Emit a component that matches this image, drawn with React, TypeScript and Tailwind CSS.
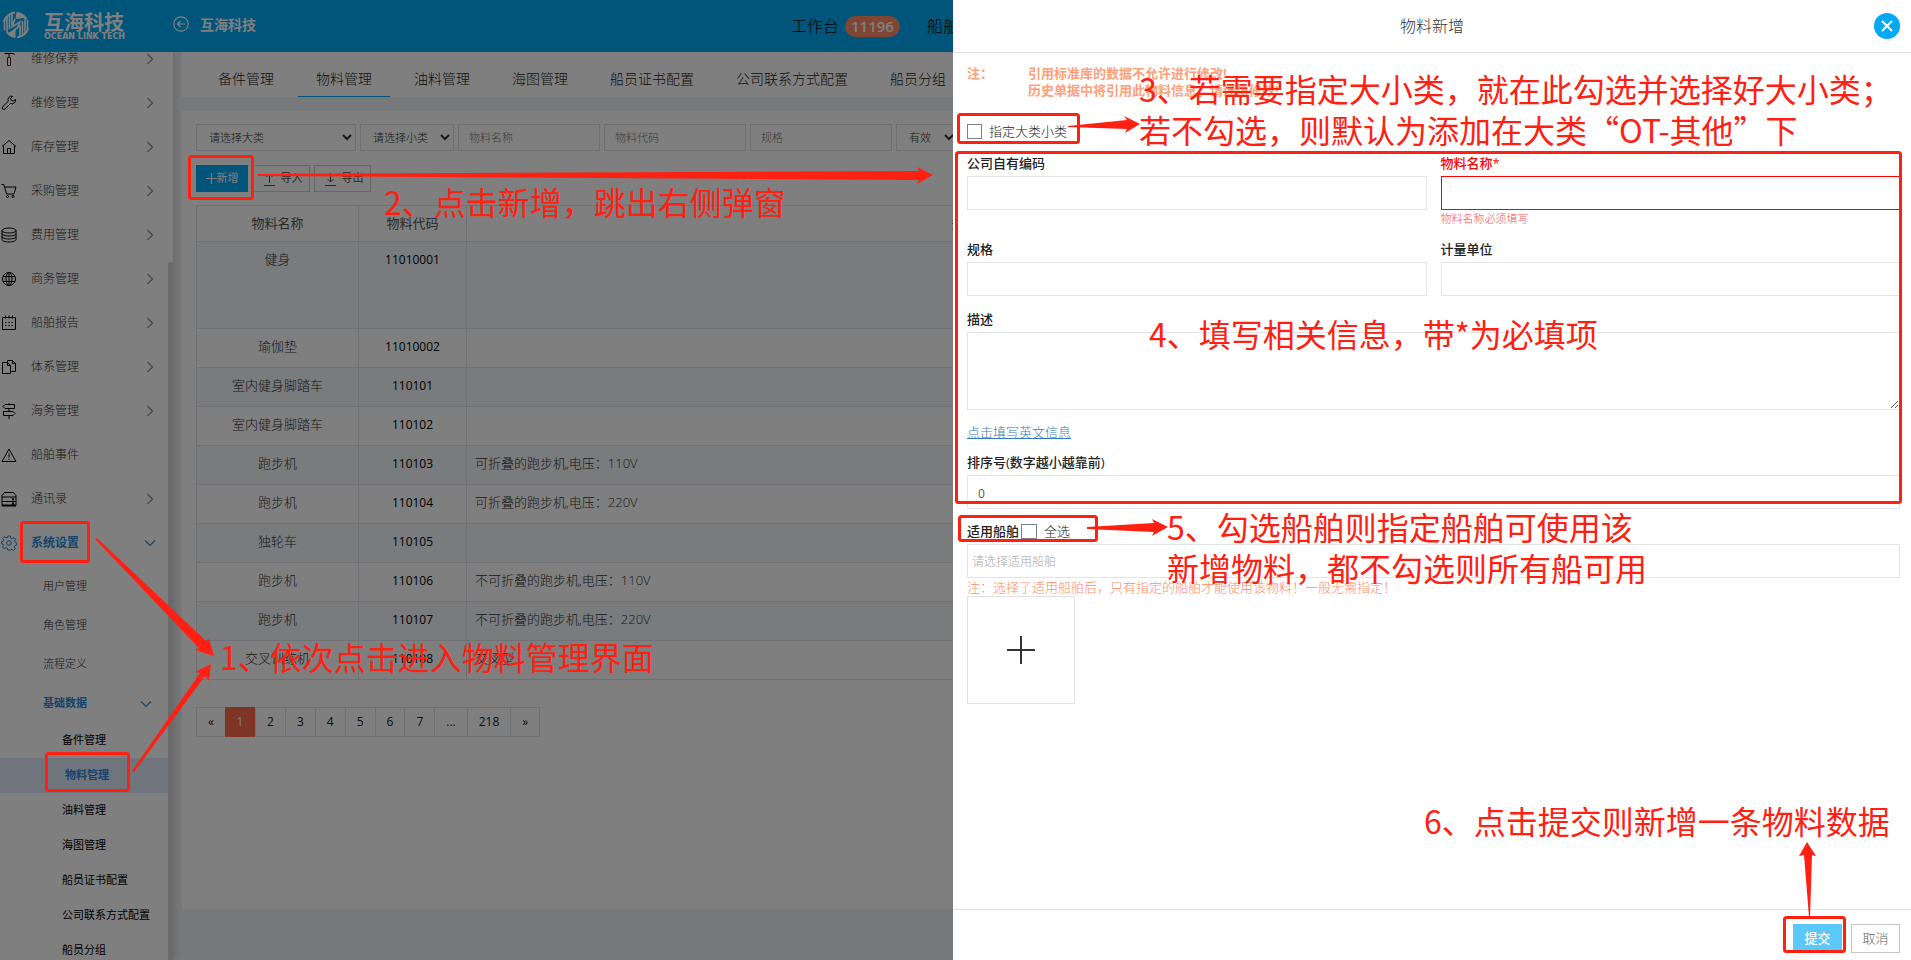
import type { ReactNode } from 'react';
import { X } from 'lucide-react';

interface MenuItem {
    name: string;
    icon: ReactNode;
    leaf?: boolean;
}

const menus: MenuItem[] = [
    { name: '维修保养', icon: <><path d="M3.5 2.500h9l1 1.500M8 2.500v4" /><path d="M6.500 6.500h3v8h-3z" stroke="#7a1010" /></> },
    { name: '维修管理', icon: <path d="M14.500 4.500a3.600 3.600 0 0 1-5 4L4 14a1.600 1.600 0 0 1-2.300-2.300L7.300 6.300a3.600 3.600 0 0 1 4.300-5L9.700 3.400l.6 2 2 .6z" /> },
    { name: '库存管理', icon: <><path d="M1 7.500 8 1.500l7 6" /><path d="M2.500 6.500v8h11v-8M6.500 14.500v-5h3v5" /></> },
    { name: '采购管理', icon: <><path d="M.5 1.500h2.300l2.700 9.500h7.500l2-7H4" /><circle cx="6.500" cy="13.500" r="1" /><circle cx="12" cy="13.500" r="1" /></> },
    { name: '费用管理', icon: <><ellipse cx="8" cy="3.500" rx="7" ry="2.500" /><path d="M1 3.500v9c0 1.400 3.100 2.500 7 2.500s7-1.100 7-2.500v-9M1 6.500C1 7.900 4.100 9 8 9s7-1.100 7-2.500M1 9.500C1 10.900 4.100 12 8 12s7-1.100 7-2.500" /></> },
    { name: '商务管理', icon: <><circle cx="8" cy="8" r="6.500" /><ellipse cx="8" cy="8" rx="3" ry="6.500" /><path d="M8 1.500v13M2 5.500h12M2 10.500h12" /></> },
    { name: '船舶报告', icon: <><path d="M1.500 2.500h13v12h-13zM4.500.5v3M8 .5v3M11.500.5v3" /><path d="M4 7.500h1.500M7.300 7.500h1.500M10.500 7.500H12M4 10.500h1.500M7.300 10.500h1.500M10.500 10.500H12" /></> },
    { name: '体系管理', icon: <><path d="M6.500 3.500V1.500h5l3 3v8h-5" /><path d="M11.500 1.500v3h3M1.500 3.500h5l3 3v8h-8zM6.500 3.500v3h3" /></> },
    { name: '海务管理', icon: <path d="M8 0v1.500M8 5.500v3M8 12.500V16M4 1.500h9.500v4H4L2 3.500zM12 8.500H2.500v4H12l2-2z" /> },
    { name: '船舶事件', icon: <><path d="M8 2 15 14.500H1z" /><path d="M8 6.500v4M8 11.800v1.200" /></>, leaf: true },
    { name: '通讯录', icon: <><path d="M3.500 1.500h9l2.500 3v10H1v-10zM1 6h14M1 10.500h14" /><path d="M11 8.300h2M11 12.500h2M1 14.500h14" strokeWidth="2" /></> },
];

const subMenus = ['用户管理', '角色管理', '流程定义'];
const dataMenus = ['备件管理', '物料管理', '油料管理', '海图管理', '船员证书配置', '公司联系方式配置', '船员分组'];
const tabs = ['备件管理', '物料管理', '油料管理', '海图管理', '船员证书配置', '公司联系方式配置', '船员分组'];
const pages = ['«', '1', '2', '3', '4', '5', '6', '7', '...', '218', '»'];

const materials = [
    { name: '健身', code: '11010001', spec: '', tall: true },
    { name: '瑜伽垫', code: '11010002', spec: '' },
    { name: '室内健身脚踏车', code: '110101', spec: '' },
    { name: '室内健身脚踏车', code: '110102', spec: '' },
    { name: '跑步机', code: '110103', spec: '可折叠的跑步机,电压：110V' },
    { name: '跑步机', code: '110104', spec: '可折叠的跑步机,电压：220V' },
    { name: '独轮车', code: '110105', spec: '' },
    { name: '跑步机', code: '110106', spec: '不可折叠的跑步机,电压：110V' },
    { name: '跑步机', code: '110107', spec: '不可折叠的跑步机,电压：220V' },
    { name: '交叉训练机', code: '110108', spec: '交叉型' },
];

function LineIcon({ children }: { children: ReactNode }) {
    return (
        <svg viewBox="0 0 16 16" className="w-4 h-4" fill="none" stroke="currentColor" strokeWidth="1">
            {children}
        </svg>
    );
}

function Arrow({ open }: { open?: boolean }) {
    return (
        <svg viewBox="0 0 12 12" className="w-3 h-3 ml-auto" fill="none" stroke="currentColor" strokeWidth="1.100">
            <path d={open ? 'M1 3.500l5 5 5-5' : 'M3.500 1l5 5-5 5'} />
        </svg>
    );
}

function Logo() {
    return (
        <svg viewBox="0 0 28 28" className="w-7 h-7">
            <g fill="none" stroke="#fff">
                <path d="M13 1.500A12.500 12.500 0 0 0 1.800 11" strokeWidth="2" />
                <path d="M15 26.500A12.500 12.500 0 0 0 26.200 17" strokeWidth="2" />
                <path d="M2.500 9.500v10M5 6v16M7.500 4v14M10 3v11" strokeWidth="1.600" />
                <path d="M25.500 8.500v10M23 6v16M20.500 10v14M18 14v11" strokeWidth="1.600" />
            </g>
            <path d="M14.500 1a13 13 0 0 1 11 7l-4-1-8 1z" fill="#fff" />
            <path d="M13.500 27a13 13 0 0 1-9-5l3.500-1 7-5-1.500 5z" fill="#fff" />
            <path d="M13 8l-3 8 8-5-3 7" fill="none" stroke="#fff" strokeWidth="1.500" />
        </svg>
    );
}

function Header() {
    return (
        <header className="relative z-10 flex shrink-0 items-center h-[52px] bg-[#03a9f4] text-white">
            <div className="flex items-center w-[173px] pl-0.5 pb-0.5">
                <Logo />
                <div className="ml-[14px] pt-1">
                    <div className="text-[20px] leading-[20px] font-bold">互海科技</div>
                    <div className="font-['DejaVu_Sans',sans-serif] text-[8px] leading-[8px] font-bold whitespace-nowrap">OCEAN LINK TECH</div>
                </div>
            </div>
            <button aria-label="返回" className="mb-1">
                <svg viewBox="0 0 16 16" className="w-4 h-4" fill="none" stroke="currentColor" strokeWidth="1.200">
                    <circle cx="8" cy="8" r="7.200" />
                    <path d="M12 8H4.500M7.500 5l-3 3 3 3" />
                </svg>
            </button>
            <span className="ml-[11px] mb-1 text-[14px] font-bold">互海科技</span>
            <nav className="flex items-center ml-[535px] text-[16px] font-light text-black whitespace-nowrap">
                <a href="#work">工作台</a>
                <span className="ml-1.5 px-1.5 h-[21px] leading-[21px] rounded-full bg-[#ff8c66] text-[15px] font-semibold text-white">11196</span>
                <a href="#ship" className="ml-[27px]">船舶管理</a>
            </nav>
        </header>
    );
}

function Sidebar() {
    return (
        <aside className="relative flex w-[173px] shrink-0 bg-white text-[12px] font-light text-[#333] shadow-[2px_0_8px_rgba(0,0,0,0.15)] overflow-hidden">
            <ul className="-mt-[15px] w-[168px] shrink-0">
                {menus.map((menu) => (
                    <li key={menu.name}>
                        <a href="#menu" className="flex items-center h-11 pl-px pr-3">
                            <span className="w-[30px] text-black"><LineIcon>{menu.icon}</LineIcon></span>
                            {menu.name}
                            {!menu.leaf && <span className="ml-auto text-[#888]"><Arrow /></span>}
                        </a>
                    </li>
                ))}
                <li>
                    <a href="#menu" className="flex items-center h-11 pl-px pr-3 text-[#2d86d9] font-bold">
                        <span className="w-[30px]">
                            <LineIcon>
                                <path d="M6.800 1h2.400l.5 2 1.600.7 1.800-1.100 1.600 1.700-1.100 1.700.6 1.500 1.300.4v2.200l-1.500.5-.6 1.500 1 1.600-1.700 1.700-1.600-1-1.500.6L9.200 15H6.800l-.5-1.700-1.500-.6-1.700 1-1.600-1.700 1-1.600-.6-1.500L.5 8.500V6.900l1.500-.5.6-1.600-1-1.600 1.600-1.600 1.700 1L6.300 3z" />
                                <circle cx="8" cy="8" r="2.300" />
                            </LineIcon>
                        </span>
                        系统设置
                        <Arrow open />
                    </a>
                    <ul className="pt-0.5 text-[11px]">
                        {subMenus.map((name) => (
                            <li key={name}>
                                <a href="#sub" className="flex items-center h-[39px] pl-[43px]">{name}</a>
                            </li>
                        ))}
                        <li>
                            <a href="#sub" className="flex items-center h-[39px] pl-[43px] pr-4 text-[#2d86d9] font-bold">
                                基础数据
                                <Arrow open />
                            </a>
                            <ul className="font-normal text-black">
                                {dataMenus.map((name) => (
                                    <li key={name}>
                                        <a
                                            href="#data"
                                            className={
                                                name === '物料管理'
                                                    ? 'flex items-center h-[35px] pl-[65px] bg-[#e0ebfb] text-[#2d86d9] font-bold'
                                                    : 'flex items-center h-[35px] pl-[62px]'
                                            }
                                        >
                                            {name}
                                        </a>
                                    </li>
                                ))}
                            </ul>
                        </li>
                    </ul>
                </li>
            </ul>
            <div className="flex flex-col w-[5px] pt-[210px]">
                <div className="flex-1 rounded-t bg-[#d4d4d4]" />
            </div>
        </aside>
    );
}

function Filters() {
    const field = 'h-[27px] w-[142px] px-2.5 border border-[#dde1e5] placeholder:text-[#777]';
    return (
        <div className="flex gap-1 text-[11px] font-light text-[#333]">
            <select aria-label="大类" className="h-[27px] w-[160px] px-2 border border-[#dde1e5]">
                <option>请选择大类</option>
            </select>
            <select aria-label="小类" className="h-[27px] w-[94px] px-2 border border-[#dde1e5]">
                <option>请选择小类</option>
            </select>
            <input aria-label="物料名称" placeholder="物料名称" className={field} />
            <input aria-label="物料代码" placeholder="物料代码" className={field} />
            <input aria-label="规格" placeholder="规格" className={field} />
            <select aria-label="状态" className="h-[27px] w-[62px] px-2 border border-[#dde1e5]">
                <option>有效</option>
            </select>
        </div>
    );
}

function MaterialTable() {
    return (
        <table className="mt-[13px] w-full table-fixed border-collapse text-[13px] leading-[18px] font-light text-[#333]">
            <thead>
                <tr className="h-9 align-top">
                    <th className="w-[162px] py-2 border border-[#dfe3e8] font-normal text-[#555]">物料名称</th>
                    <th className="w-[108px] py-2 border border-[#dfe3e8] font-normal text-[#555]">物料代码</th>
                    <th className="w-[996px] py-2 border border-[#dfe3e8] font-normal text-[#555]">规格</th>
                    <th className="py-2 border border-[#dfe3e8] font-normal text-[#555]">操作</th>
                </tr>
            </thead>
            <tbody>
                {materials.map((item) => (
                    <tr key={item.code} className={item.tall ? 'h-[87px] align-top odd:bg-[#f3f6fa]' : 'h-[39px] align-top odd:bg-[#f3f6fa]'}>
                        <td className="pt-2 border border-[#dfe3e8] text-center">{item.name}</td>
                        <td className="pt-[9px] border border-[#dfe3e8] text-center text-[12px] font-normal text-black">{item.code}</td>
                        <td className="px-2 pt-2 border border-[#dfe3e8]">{item.spec}</td>
                        <td className="border border-[#dfe3e8]" />
                    </tr>
                ))}
            </tbody>
        </table>
    );
}

function Pagination() {
    return (
        <div className="flex mt-[27px] text-[12px] text-[#222]">
            {pages.map((page) => (
                <button
                    key={page}
                    className={
                        page === '1'
                            ? 'h-[30px] w-[30px] bg-[#ff6b4d] border border-[#ff6b4d] text-white'
                            : 'h-[30px] min-w-[30px] px-[11px] -mr-px border border-[#dfe3e8]'
                    }
                >
                    {page}
                </button>
            ))}
        </div>
    );
}

function Content() {
    return (
        <main className="flex flex-col flex-1 min-w-0 pl-[9px] pb-[51px]">
            <nav className="flex shrink-0 gap-1.5 h-[45px] pl-[18px] bg-white text-[14px] font-light text-[#222] whitespace-nowrap">
                {tabs.map((tab) => (
                    <a
                        key={tab}
                        href="#tab"
                        className={
                            tab === '物料管理'
                                ? 'flex items-center px-[18px] pt-3 pb-1 border-b border-[#03a9f4]'
                                : 'flex items-center px-[18px] pt-3 pb-1 border-b border-transparent'
                        }
                    >
                        {tab}
                    </a>
                ))}
            </nav>
            <section className="flex-1 mt-[14px] px-[14px] pt-[13px] bg-white overflow-hidden">
                <Filters />
                <div className="flex mt-[14px] text-[11px] text-[#555]">
                    <button className="flex items-center justify-center h-[27px] w-[52px] bg-[#03a9f4] text-white whitespace-nowrap">
                        <svg viewBox="0 0 12 12" className="w-[11px] h-[11px]" stroke="currentColor" strokeWidth="1.200">
                            <path d="M6 0v12M0 6h12" />
                        </svg>
                        新增
                    </button>
                    <button className="flex items-center justify-center gap-1 h-[27px] w-[57px] ml-[5px] border border-[#ccc]">
                        <LineIcon><path d="M3 14.500h11M8.500 12V3M5.500 6l3-3 3 3" /></LineIcon>
                        导入
                    </button>
                    <button className="flex items-center justify-center gap-1 h-[27px] w-[57px] ml-1 border border-[#ccc]">
                        <LineIcon><path d="M3 14.500h11M8.500 2v9M5.500 8l3 3 3-3" /></LineIcon>
                        导出
                    </button>
                </div>
                <MaterialTable />
                <Pagination />
            </section>
        </main>
    );
}

function Field({ id, label }: { id: string; label: string }) {
    return (
        <div className="flex flex-col">
            <label htmlFor={id} className="leading-[18px] font-medium">{label}</label>
            <input id={id} className="mt-1 h-[34px] w-full px-2.5 border border-[#e2e5e8]" />
        </div>
    );
}

function Drawer() {
    return (
        <div role="dialog" aria-label="物料新增" className="absolute inset-y-0 right-0 flex flex-col w-[50.13%] bg-white text-[13px] text-[#222]">
            <div className="relative flex shrink-0 items-center justify-center h-[53px] border-b border-[#e2e2e2]">
                <h2 className="text-[16px] font-light text-[#333]">物料新增</h2>
                <button aria-label="关闭" className="absolute right-[11px] flex items-center justify-center w-[26px] h-[26px] rounded-full bg-[#03a9f4] text-white">
                    <X size={18} strokeWidth={2.5} />
                </button>
            </div>
            <form className="flex-1 pl-[14px] pr-[11px] pt-3">
                <div className="flex leading-[17px] font-bold text-[#ffa07a]">
                    <span className="w-[61px]">注：</span>
                    <p>
                        引用标准库的数据不允许进行修改!<br />
                        历史单据中将引用此物料信息，请谨慎修改!
                    </p>
                </div>
                <label className="flex items-center mt-[23px] leading-[18px] font-light">
                    <input type="checkbox" className="appearance-none w-[15px] h-[15px] mr-[7px] border border-[#76838f]" />
                    指定大类小类
                </label>
                <div className="grid grid-cols-2 gap-x-[14px] mt-[14px]">
                    <Field id="own-code" label="公司自有编码" />
                    <div className="flex flex-col">
                        <label htmlFor="material-name" className="leading-[18px] font-medium text-[#ff0000]">
                            物料名称<span className="font-normal">*</span>
                        </label>
                        <input id="material-name" className="mt-1 h-[34px] w-full px-2.5 border border-[#ff0000]" />
                        <span className="leading-[18px] text-[11px] font-light text-[#ff5050]">物料名称必须填写</span>
                    </div>
                </div>
                <div className="grid grid-cols-2 gap-x-[14px] mt-3">
                    <Field id="spec" label="规格" />
                    <Field id="unit" label="计量单位" />
                </div>
                <label htmlFor="remark" className="block mt-[14px] leading-[18px] font-medium">描述</label>
                <textarea id="remark" className="block mt-1 h-[78px] w-full border border-[#e2e5e8] resize" />
                <a href="#english" className="block w-fit mt-[13px] leading-[18px] font-light text-[#337ab7] underline">点击填写英文信息</a>
                <label htmlFor="sort" className="block mt-3 leading-[18px] font-medium">排序号(数字越小越靠前)</label>
                <input id="sort" defaultValue="0" className="mt-1 h-[34px] w-full px-2.5 pt-0.5 border border-[#e2e5e8] text-[12px] text-[#555]" />
                <div className="flex items-center mt-[13px] leading-[18px]">
                    <label htmlFor="ships" className="font-medium">适用船舶</label>
                    <label className="flex items-center font-light">
                        <input type="checkbox" className="appearance-none w-4 h-[15px] ml-0.5 mr-[7px] border border-[#76838f]" />
                        全选
                    </label>
                </div>
                <input id="ships" placeholder="请选择适用船舶" className="block mt-1 h-[34px] w-full px-1 border border-[#e2e5e8] text-[12px] font-light placeholder:text-[#aaa]" />
                <p className="leading-[18px] font-light text-[#ff8c66]">注：选择了适用船舶后，只有指定的船舶才能使用该物料！一般无需指定！</p>
                <button type="button" aria-label="上传" className="flex items-center justify-center w-[108px] h-[108px] border border-[#e2e2e2] text-[#333]">
                    <svg viewBox="0 0 30 30" className="w-[30px] h-[30px]" stroke="currentColor" strokeWidth="2">
                        <path d="M15 1v28M1 15h28" />
                    </svg>
                </button>
            </form>
            <div className="flex shrink-0 justify-end gap-[9px] h-[51px] pt-[14px] pr-[11px] border-t border-[#e2e2e2]">
                <button className="w-[49px] h-[29px] bg-[#5bc8fa] text-white font-medium">提交</button>
                <button className="w-[49px] h-[29px] border border-[#c5c5c5] font-light text-[#666]">取消</button>
            </div>
        </div>
    );
}

// numbered guide drawn on top of the page
function Guide() {
    return (
        <div className="absolute inset-0 pointer-events-none font-['Noto_Sans_CJK_SC',sans-serif] text-[32px] leading-[41px] text-[#ff2012] whitespace-nowrap">
            <svg className="absolute inset-0 w-full h-full" fill="currentColor">
                <g fill="none" stroke="currentColor" strokeWidth="3">
                    <rect x="189.500" y="156.500" width="63" height="42" rx="2" />
                    <rect x="21.500" y="522.500" width="67" height="39" rx="2" />
                    <rect x="46.500" y="753.500" width="82" height="37" rx="2" />
                    <rect x="958.500" y="114.500" width="120" height="28" rx="2" />
                    <rect x="956.500" y="152.500" width="944" height="350" rx="2" />
                    <rect x="959.500" y="516.500" width="137" height="24" rx="2" />
                    <rect x="1784.500" y="917.500" width="60" height="34" rx="2" />
                </g>
                <path d="M95 539l2-1 109 103 3-2 5 17-19-6 4-2z" />
                <path d="M132 771l2 1 71-96 4 5 2-17-16 8 5 1z" />
                <path d="M258 174l661-3-2-4 16 8-16 9 2-4-661-4z" />
                <path d="M1068 126l59-6-3-4 16 8-15 9 2-4-59-2z" />
                <path d="M1087 527l67-4-2-4 16 8-16 9 2-4-67-3z" />
                <path d="M1809 917l-5-62-5 1 8-14 9 14-4-1-2 62z" />
            </svg>
            <p className="absolute left-[220px] top-[636px]">1、依次点击进入物料管理界面</p>
            <p className="absolute left-[384px] top-[181px]">2、点击新增，跳出右侧弹窗</p>
            <p className="absolute left-[1139px] top-[68px]">
                3、若需要指定大小类，就在此勾选并选择好大小类；<br />
                若不勾选，则默认为添加在大类“OT-其他”下
            </p>
            <p className="absolute left-[1149px] top-[313px]">4、填写相关信息，带*为必填项</p>
            <p className="absolute left-[1167px] top-[506px]">
                5、勾选船舶则指定船舶可使用该<br />
                新增物料，都不勾选则所有船可用
            </p>
            <p className="absolute left-[1424px] top-[800px]">6、点击提交则新增一条物料数据</p>
        </div>
    );
}

export default function App() {
    return (
        <div lang="zh-CN" className="relative flex flex-col h-screen overflow-hidden bg-[#eef1f5] font-['Open_Sans','Noto_Sans_CJK_SC',sans-serif]">
            <Header />
            <div className="flex flex-1 min-h-0">
                <Sidebar />
                <Content />
            </div>
            <div className="absolute inset-0 z-20 bg-black/50" />
            <div className="absolute inset-0 z-30">
                <Drawer />
                <Guide />
            </div>
        </div>
    );
}
